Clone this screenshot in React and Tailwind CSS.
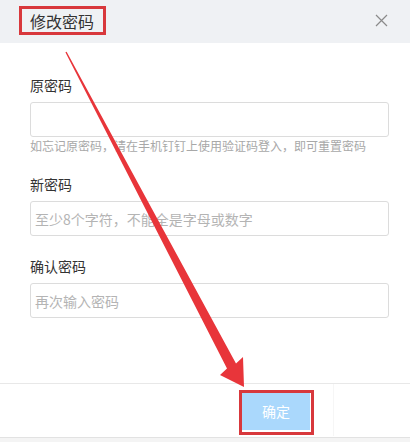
import React from "react";

const font = { fontFamily: '"Noto Sans CJK SC", "Noto Sans", sans-serif' };

function Field({ label, placeholder, hint }) {
  return (
    <div className="flex flex-col">
      <div className="text-[14px] leading-[20px] text-[#333]">{label}</div>
      <input
        className="mt-[7px] h-[35px] w-full rounded-[3px] border border-[#dcdcdc] bg-white px-[4px] text-[14px] text-[#333] outline-none placeholder:text-[#b4b4b4]"
        placeholder={placeholder}
        style={font}
      />
      {hint && (
        <div className="mt-px text-[12px] leading-[16px] text-[#a8a8a8] whitespace-nowrap">{hint}</div>
      )}
    </div>
  );
}

export default function App() {
  return (
    <div className="relative w-[410px] h-[442px] overflow-hidden bg-white" style={font}>
      <div className="flex h-[43px] items-center justify-between bg-[#eff1f4] pl-[19px] pr-[21px]">
        <div className="mt-[-2px] flex h-[29px] items-center border-[3px] border-[#d8383c] pl-[8px] pr-[9px] text-[16px] text-[#333]">
          修改密码
        </div>
        <svg width="13" height="13" viewBox="0 0 13 13" className="mr-[1px] mt-[-2px]">
          <path d="M1 1L12 12M12 1L1 12" stroke="#8a8a8a" strokeWidth="1.2" />
        </svg>
      </div>

      <div className="flex h-[340px] flex-col gap-[20px] pl-[30px] pr-[21px] pt-[32px]">
        <Field label="原密码" placeholder="" hint="如忘记原密码，请在手机钉钉上使用验证码登入，即可重置密码" />
        <Field label="新密码" placeholder="至少8个字符，不能全是字母或数字" />
        <Field label="确认密码" placeholder="再次输入密码" />
      </div>

      <div className="flex h-[54px] items-center justify-end border-t border-[#e8e8e8] pr-[96px]">
        <div className="mt-[3px] border-[3px] border-[#d8383c] pb-[2px] pr-px">
          <button className="h-[37px] w-[68px] bg-[#aad8fc] text-[14px] text-white" style={font}>
            确定
          </button>
        </div>
        <div className="absolute left-[333px] top-[384px] h-[52px] w-px bg-[#f6f6f6]" />
      </div>
      <div className="h-[5px] border-t border-[#e2e2e2] bg-[#f4f4f4]" />

      <svg
        className="pointer-events-none absolute left-0 top-0"
        width="410"
        height="442"
        viewBox="0 0 410 442"
      >
        <polygon
          points="66.6,51.7 236,363.6 243,357 244,387 220,375 227,368.4 65.4,52.3"
          fill="#e8353a"
        />
      </svg>
    </div>
  );
}
